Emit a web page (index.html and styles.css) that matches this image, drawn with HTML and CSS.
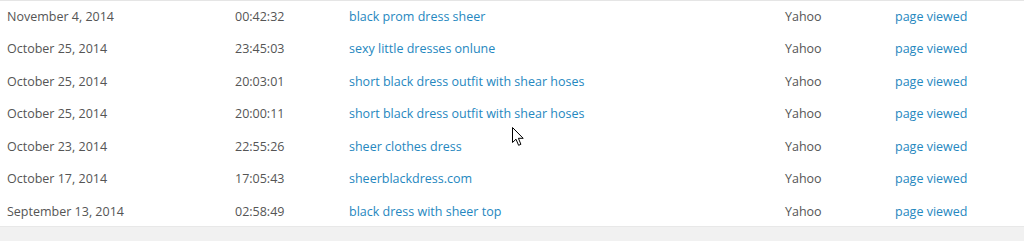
FILE: index.html
```html
<!DOCTYPE html>
<html>
<head>
<meta charset="utf-8">
<link rel="stylesheet" href="styles.css">
</head>
<body>
<div class="panel">
  <table class="log">
    <colgroup>
      <col class="c-date"><col class="c-time"><col class="c-kw"><col class="c-eng"><col class="c-act">
    </colgroup>
    <tbody>
      <tr><td>November 4, 2014</td><td>00:42:32</td><td><a href="#">black prom dress sheer</a></td><td>Yahoo</td><td><a href="#">page viewed</a></td></tr>
      <tr><td>October 25, 2014</td><td>23:45:03</td><td><a href="#">sexy little dresses onlune</a></td><td>Yahoo</td><td><a href="#">page viewed</a></td></tr>
      <tr><td>October 25, 2014</td><td>20:03:01</td><td><a href="#">short black dress outfit with shear hoses</a></td><td>Yahoo</td><td><a href="#">page viewed</a></td></tr>
      <tr><td>October 25, 2014</td><td>20:00:11</td><td><a href="#">short black dress outfit with shear hoses</a></td><td>Yahoo</td><td><a href="#">page viewed</a></td></tr>
      <tr><td>October 23, 2014</td><td>22:55:26</td><td><a href="#">sheer clothes dress</a></td><td>Yahoo</td><td><a href="#">page viewed</a></td></tr>
      <tr><td>October 17, 2014</td><td>17:05:43</td><td><a href="#">sheerblackdress.com</a></td><td>Yahoo</td><td><a href="#">page viewed</a></td></tr>
      <tr><td>September 13, 2014</td><td>02:58:49</td><td><a href="#">black dress with sheer top</a></td><td>Yahoo</td><td><a href="#">page viewed</a></td></tr>
    </tbody>
  </table>
</div>
<svg class="cursor" width="13" height="20" viewBox="0 0 13 20">
  <path d="M0.5 0.5 L0.5 15.5 L4 12.2 L6.6 18.3 L8.9 17.3 L6.4 11.3 L11.2 11.3 Z" fill="#fff" stroke="#000" stroke-width="1" stroke-linejoin="miter"/>
</svg>
</body>
</html>
```

FILE: styles.css
```css
html, body {
  margin: 0;
  padding: 0;
  background: #f1f1f1;
}
body {
  font-family: "Open Sans", "Liberation Sans", sans-serif;
  font-size: 12.5px;
  color: #555;
  position: relative;
  height: 241px;
  overflow: hidden;
}
.panel {
  background: #fff;
  border-top: 1px solid #e5e5e5;
  border-bottom: 1px solid #e8e8e8;
}
.log {
  width: 100%;
  border-collapse: collapse;
  table-layout: fixed;
  margin-top: -1px;
}
.c-date { width: 228px; }
.c-time { width: 114px; }
.c-kw { width: 436px; }
.c-eng { width: 110px; }
.c-act { width: auto; }
.log td {
  height: 32.5px;
  padding: 0 7px;
  line-height: 17px;
  vertical-align: middle;
  white-space: nowrap;
}
.log tr:last-child td {
  height: 31px;
  vertical-align: top;
  padding-top: 8px;
  box-sizing: border-box;
}
.log a {
  color: #2587c0;
  text-decoration: none;
}
.cursor {
  position: absolute;
  left: 512px;
  top: 127px;
}
```
